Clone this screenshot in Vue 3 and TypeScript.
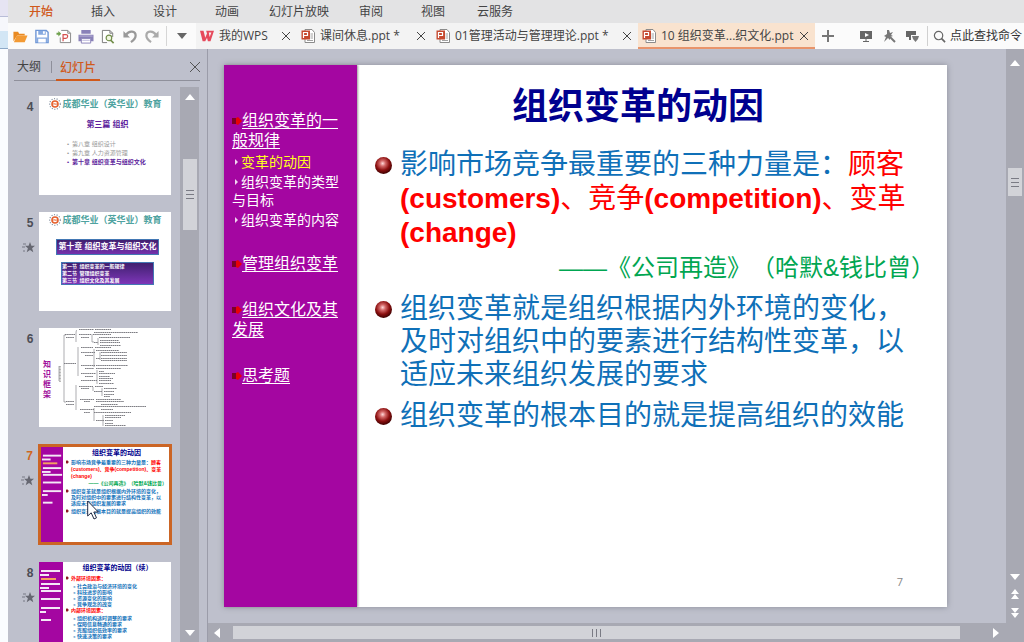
<script setup lang="ts">
interface Tab { label: string; kind: 'wps' | 'ppt'; size: string; active?: boolean }
interface NavItem { text: string; level: 'main' | 'sub'; current?: boolean }

const menus: string[] = ['开始', '插入', '设计', '动画', '幻灯片放映', '审阅', '视图', '云服务']

const tabs: Tab[] = [
  { label: '我的WPS', kind: 'wps', size: 't1' },
  { label: '课间休息.ppt *', kind: 'ppt', size: 't2' },
  { label: '01管理活动与管理理论.ppt *', kind: 'ppt', size: 't3' },
  { label: '10 组织变革...织文化.ppt', kind: 'ppt', size: 't4', active: true },
]

const nav: NavItem[] = [
  { text: '组织变革的一般规律', level: 'main' },
  { text: '变革的动因', level: 'sub', current: true },
  { text: '组织变革的类型与目标', level: 'sub' },
  { text: '组织变革的内容', level: 'sub' },
  { text: '管理组织变革', level: 'main' },
  { text: '组织文化及其发展', level: 'main' },
  { text: '思考题', level: 'main' },
]

const slides: number[] = [4, 5, 6, 7, 8]
const selected = 7

const navBars: number[][] = [
  [2, 8, 19], [1, 12, 9], [2, 16, 15], [2, 21, 19], [1, 25, 9],
  [2, 28, 20], [2, 36, 19], [2, 45, 19], [1, 49, 6], [2, 57, 10],
]

const outer: string[] = ['社会政治与经济环境的变化', '科技进步的影响', '资源变化的影响', '竞争观念的改变']
const inner: string[] = ['组织机构适时调整的要求', '保障信息畅通的要求', '克服组织低效率的要求', '快速决策的要求']

/* x, y, width of each leaf label in the outline of slide 6 */
const leaves: number[][] = [
  [40, 1, 15], [56, 1, 16], [55, 4, 44], [26, 6, 10], [27, 9, 8], [40, 6, 12], [42, 9, 8], [54, 6, 18],
  [60, 9, 31], [55, 14, 4], [61, 12, 19], [61, 14, 20], [61, 17, 21], [42, 19, 12], [56, 19, 16],
  [57, 22, 23], [42, 24, 14], [46, 27, 8], [62, 24, 26], [62, 27, 26], [57, 30, 4], [62, 30, 26],
  [62, 32, 26], [25, 35, 12], [42, 37, 14], [57, 37, 32], [46, 40, 9], [57, 40, 25], [60, 43, 5],
  [42, 45, 15], [60, 45, 16], [46, 48, 8], [60, 48, 11], [60, 50, 14], [42, 52, 16], [60, 52, 12],
  [60, 55, 15], [40, 58, 14], [56, 58, 8], [42, 60, 8], [65, 60, 13], [55, 63, 8], [65, 63, 10],
  [65, 66, 10], [65, 68, 6], [41, 71, 14], [57, 71, 25], [27, 73, 8], [45, 73, 6], [57, 73, 28],
  [27, 76, 8], [62, 76, 17], [41, 81, 14], [55, 78, 52], [45, 84, 6], [62, 81, 12], [55, 84, 37],
  [66, 87, 20], [66, 89, 16], [57, 92, 8], [66, 92, 8], [66, 95, 8], [66, 97, 21],
]
</script>

<template>
  <div class="screen">
    <div class="desktop-edge"><i class="e1" /><i class="e2" /><i class="e3" /><i class="e4" /></div>
    <div class="app">
      <nav class="menubar" aria-label="菜单">
        <button v-for="(m, i) in menus" :key="m" :class="{ on: i === 0, wide: m.length > 4 }">{{ m }}</button>
      </nav>

      <header class="bar">
        <div class="quick">
          <button aria-label="打开"><svg viewBox="0 0 16 16"><path d="M1 13V3h5l1 2h6v2H5z" fill="#e98a22" /><path d="M4.500 7H16l-3 7H1.500z" fill="#f39a34" /></svg></button>
          <button aria-label="保存"><svg viewBox="0 0 16 16"><path d="M1.500 1.500h11l2 2v11h-13z" fill="#fff" stroke="#6f97d6" stroke-width="1.500" /><path d="M4 2h8v4H4zM2 9h12v5H2z" fill="#86a9e0" /><path d="M9 2.500h2v2.500H9zM4 10.500h8v4H4z" fill="#fff" /></svg></button>
          <button aria-label="输出PDF"><svg viewBox="0 0 16 16"><path d="M5 1.500h7l3 3v10H4V9" fill="#fff" stroke="#858585" /><path d="M12 1.500v3h3" fill="none" stroke="#858585" /><path d="M7 13V6h3c3 0 2 4 0 4H7" fill="none" stroke="#d4514f" stroke-width="1.300" /><path d="M0 4h2V2l3 3-3 3V6H0z" fill="#6ea04c" /></svg></button>
          <button aria-label="打印"><svg viewBox="0 0 16 16"><path d="M3 1h10v4H3zM0 6h16v7H0z" fill="#8981b8" /><path d="M3 10h10v5H3z" fill="#fff" stroke="#8981b8" /><path d="M4 12h8M1 7.500h14" stroke="#b9b3d9" /></svg></button>
          <button aria-label="打印预览"><svg viewBox="0 0 16 16"><path d="M7 14.500H2v-13h8l3 3v4" fill="#fff" stroke="#777" /><path d="M10 1.500v3h3" fill="none" stroke="#777" /><circle cx="9" cy="9.500" r="3" fill="#eff5df" stroke="#718d49" stroke-width="1.200" /><path d="m11 12 3 3" stroke="#718d49" stroke-width="1.800" /></svg></button>
          <button aria-label="撤销"><svg viewBox="0 0 16 16"><path d="M4 6c3-5 10-4 10 1 0 3-2 5-5 7" fill="none" stroke="#999" stroke-width="2.400" /><path d="M1 2v7h7z" fill="#999" /></svg></button>
          <button aria-label="恢复"><svg viewBox="0 0 16 16"><path d="M12 6C9 1 2 2 2 7c0 3 2 5 5 7" fill="none" stroke="#aaa" stroke-width="2.400" /><path d="M15 2v7H8z" fill="#aaa" /></svg></button>
        </div>
        <button class="more" aria-label="更多"><svg viewBox="0 0 10 6"><path d="M0 0h10L5 6z" fill="#666" /></svg></button>

        <div v-for="t in tabs" :key="t.label" class="tab" :class="[t.size, { active: t.active }]">
          <svg v-if="t.kind === 'wps'" class="ti" viewBox="0 0 16 14"><path d="M0 1h4l2 8 2-5-1-3h9l-4 12H9L8 9l-2 4H3z" fill="#e64a5c" /><path d="m10 3 1 5 2-5z" fill="#f3f3f3" /></svg>
          <svg v-else class="ti" viewBox="0 0 14 14"><path d="M4 .5h7l2.500 3v10H4z" fill="#fff" stroke="#8b8b8b" /><path d="M9.500 5H12M9.500 7H12M9.500 9H12M6 11.500h6" stroke="#8a8a8a" stroke-width=".8" /><path d="M.5 1.500h8.500v9H.5z" fill="#c6492f" /><path d="M2.500 9V3.500h4v3h-4" fill="none" stroke="#fff" stroke-width="1.200" /></svg>
          <a href="#">{{ t.label }}</a>
          <button class="close" aria-label="关闭标签"><svg viewBox="0 0 8 8"><path d="m0 0 8 8M8 0 0 8" stroke="#444" /></svg></button>
        </div>

        <div class="tools">
          <button class="plus" aria-label="新建"><svg viewBox="0 0 12 12"><path d="M6 0v12M0 6h12" stroke="#777" stroke-width="2" /></svg></button>
          <button aria-label="播放"><svg viewBox="0 0 14 14"><path d="M1 2h12v8H1z" fill="#666" /><path d="M7 10v3M4 12.500h6" stroke="#666" /><path d="m6 4 4 2-4 2z" fill="#fff" /></svg></button>
          <button aria-label="动画效果"><svg viewBox="0 0 14 14"><path d="M5 1h2l1 3 3-1-2 3 2 1-3 1v3L6 9l-4 4 2-5-2-1 3-2z" fill="#777" /><path d="m8 8 5 5" stroke="#777" stroke-width="2" /></svg></button>
          <button aria-label="界面选项"><svg viewBox="0 0 14 14"><path d="M1 2h10v4H6v5H4V8H1z" fill="#666" /><path d="M7 7h7l-1 3-2.500 3L8 10z" fill="#777" /></svg></button>
        </div>
        <label class="search">
          <svg viewBox="0 0 14 14"><circle cx="6" cy="6" r="4.500" fill="none" stroke="#666" stroke-width="1.300" /><path d="m9 9 4 4" stroke="#666" stroke-width="1.800" /></svg>
          <input type="text" placeholder="点此查找命令" aria-label="点此查找命令">
        </label>
      </header>

      <div class="work">
        <aside class="panel">
          <div class="panel-head">
            <button>大纲</button><span class="sep" /><button class="on">幻灯片</button>
            <button class="x" aria-label="关闭窗格"><svg viewBox="0 0 10 10"><path d="m0 0 10 10M10 0 0 10" stroke="#555" /></svg></button>
          </div>
          <div class="panel-body">
            <ol class="thumbs">
              <li v-for="n in slides" :key="n" :class="{ sel: n === selected }">
                <div class="mark">
                  <b>{{ n }}</b>
                  <svg v-if="n !== 4 && n !== 6" viewBox="0 0 13 11"><path d="m8 0 1.400 3.700H13L10.100 6.200l1.200 4L8 8l-3.300 2.200 1.200-4L3 3.700h3.600z" fill="#666771" /><path d="M1 2h3M0 5h3M1 9h2" stroke="#777884" /></svg>
                </div>
                <div class="thumb" :class="'s' + n">
                  <div v-if="n < 6" class="brand">
                    <svg viewBox="0 0 14 12"><circle cx="7" cy="6" r="5.300" fill="none" stroke="#7c8a9c" stroke-width="1.200" stroke-dasharray="1 1.600" /><circle cx="7" cy="6" r="3" fill="#fff" stroke="#e6602d" stroke-width="1.600" /><path d="M4.500 6.500c2-2 3 1 5-1" fill="none" stroke="#e6602d" /></svg>
                    <span>成都华业（英华业）教育</span>
                  </div>
                  <template v-if="n === 4">
                    <h3>第三篇 组织</h3>
                    <ul><li>第八章 组织设计</li><li>第九章 人力资源管理</li><li class="cur">第十章 组织变革与组织文化</li></ul>
                  </template>
                  <template v-else-if="n === 5">
                    <h3>第十章 组织变革与组织文化</h3>
                    <div class="box"><p>第一节&ensp;组织变革的一般规律</p><p>第二节&ensp;管理组织变革</p><p>第三节&ensp;组织文化及其发展</p></div>
                  </template>
                  <template v-else-if="n === 6">
                    <strong><span v-for="c in '知识框架'" :key="c">{{ c }}</span></strong>
                    <svg class="map" viewBox="0 0 132 99">
                      <path d="M27 7h-2v67h2M20 38v15M38 2q-1 0-1 3v9M53 6v8h2M59 10v7M39 19v29M55 21v18M61 24v8M58 42v14M37 57v25M54 59v4M63 60v8M55 80v13M64 87v11" fill="none" stroke="#77777c" stroke-width=".6" />
                      <path d="M21 38v16" stroke="#777" stroke-dasharray="1 .5" />
                      <path v-for="(l, i) in leaves" :key="i" :d="`M${l[0]} ${l[1]}.5h${l[2]}`" stroke="#7c7c82" stroke-width="1.200" stroke-dasharray="1.600 .5" />
                    </svg>
                  </template>
                  <template v-else>
                    <svg class="bars" viewBox="0 0 24 99" preserveAspectRatio="xMinYMin slice"><rect v-for="(b, i) in navBars" :key="i" :x="b[0]" :y="b[1]" :width="b[2]" height="2" :fill="i === 2 ? '#f5a060' : '#f4e8f6'" /></svg>
                    <div v-if="n === 7" class="mini">
                      <h3>组织变革的动因</h3>
                      <p class="dot first">影响市场竞争最重要的三种力量是：<em>顾客(customers)、竞争(competition)、变革(change)</em></p>
                      <p class="cite">——《公司再造》（哈默&amp;钱比曾）</p>
                      <p class="dot">组织变革就是组织根据内外环境的变化，及时对组织中的要素进行结构性变革，以适应未来组织发展的要求</p>
                      <p class="dot last">组织变革的根本目的就是提高组织的效能</p>
                    </div>
                    <div v-else class="mini two">
                      <h3>组织变革的动因（续）</h3>
                      <p class="dot"><em>外部环境因素：</em></p>
                      <p v-for="o in outer" :key="o" class="sub">﹥{{ o }}</p>
                      <p class="dot"><em>内部环境因素：</em></p>
                      <p v-for="o in inner" :key="o" class="sub">﹥{{ o }}</p>
                    </div>
                  </template>
                  <svg v-if="n === selected" class="cursor" viewBox="0 0 12 20"><path d="M.7 1v15l3.500-3.200L7 19l2.500-1.200L6.800 12H11.300z" fill="#fff" stroke="#222b44" /></svg>
                </div>
              </li>
            </ol>
            <div class="vscroll left">
              <svg class="arrow" viewBox="0 0 10 6"><path d="M0 6h10L5 0z" fill="#fff" /></svg>
              <div class="track"><div class="grip"><i /><i /><i /></div></div>
              <svg class="arrow" viewBox="0 0 10 6"><path d="M0 0h10L5 6z" fill="#fff" /></svg>
            </div>
          </div>
        </aside>

        <main class="stage">
          <div class="canvas">
            <article class="slide">
              <nav class="side" aria-label="章节">
                <a v-for="i in nav" :key="i.text" href="#" :class="[i.level, { current: i.current }]">
                  <svg v-if="i.level === 'main'" viewBox="0 0 10 10"><path d="M0 2h4l2-1 4 4-4 4-2-1H0z" fill="#e80008" /><path d="M0 2h4v6H0z" fill="#7a0028" /></svg>
                  <svg v-else viewBox="0 0 9 10"><path d="m3 2 3 3-3 3z" fill="#f0d5f0" /></svg><span>{{ i.text }}</span>
                </a>
              </nav>
              <section class="content">
                <h1>组织变革的动因</h1>
                <ul>
                  <li>影响市场竞争最重要的三种力量是：<em>顾客<b>(customers)</b>、竞争<b>(competition)</b>、变革<b>(change)</b></em></li>
                </ul>
                <p class="quote">——《公司再造》（哈默&amp;钱比曾）</p>
                <ul class="second">
                  <li>组织变革就是组织根据内外环境的变化，及时对组织中的要素进行结构性变革，以适应未来组织发展的要求</li>
                  <li>组织变革的根本目的就是提高组织的效能</li>
                </ul>
                <footer>7</footer>
              </section>
            </article>
          </div>
          <div class="hscroll">
            <svg viewBox="0 0 6 10"><path d="M6 0v10L0 5z" fill="#fff" /></svg>
            <div class="hthumb"><i /><i /><i /></div>
            <svg viewBox="0 0 6 10"><path d="M0 0v10l6-5z" fill="#fff" /></svg>
          </div>
        </main>

        <div class="vscroll right">
          <svg class="arrow" viewBox="0 0 10 6"><path d="M0 6h10L5 0z" fill="#fff" /></svg>
          <div class="track"><div class="grip"><i /><i /><i /></div></div>
          <svg class="arrow" viewBox="0 0 10 6"><path d="M0 0h10L5 6z" fill="#fff" /></svg>
          <svg class="dbl" viewBox="0 0 10 10"><path d="M1 5h8L5 0zM1 10h8L5 5z" fill="#fff" /></svg>
          <svg class="dbl" viewBox="0 0 10 10"><path d="M1 0h8L5 5zM1 5h8l-4 5z" fill="#fff" /></svg>
        </div>
      </div>
    </div>
  </div>
</template>

<style>
body { margin: 0; overflow: hidden; }
</style>

<style scoped>
* { box-sizing: border-box; }
.screen { display: flex; height: 100vh; overflow: hidden; background: #bec0cc; font: 12px/18px "Open Sans", "Noto Sans CJK SC", sans-serif; color: #444; text-spacing-trim: space-all; }
button { border: 0; padding: 0; margin: 0; background: none; font: inherit; color: inherit; display: flex; align-items: center; justify-content: center; white-space: nowrap; }
a { color: inherit; text-decoration: none; }
svg { display: block; flex: none; }
ul, ol, p, h1, h3 { margin: 0; padding: 0; list-style: none; }
em { font-style: normal; }
.desktop-edge { width: 8px; flex: none; display: flex; flex-direction: column; }
.desktop-edge i { display: block; }
.e1 { height: 17px; background: #e6e4f3; border-bottom: 1px solid #b9bdd8; }
.e2 { height: 14px; background: #f6f7fc; }
.e3 { height: 18px; background: #d3e6f5; border-bottom: 1px solid #8ea9c8; }
.e4 { flex: 1; background: #fafcff; }
.app { flex: 1; min-width: 0; display: flex; flex-direction: column; }

.menubar { height: 23px; flex: none; display: flex; padding-left: 2px; background: #e3e3e4; }
.menubar button { width: 62px; }
.menubar .wide { width: 82px; }
.menubar .on { color: #d0591b; font-weight: 500; }

.bar { height: 26px; flex: none; display: flex; background: #fbfbfb; }
.quick { display: flex; align-items: center; gap: 6px; padding: 0 6px 0 4px; border-right: 1px solid #d6d6d6; margin: 3px 0; }
.quick svg { width: 16px; height: 15px; }
.more { width: 29px; }
.more svg { width: 10px; height: 6px; }
.tab { flex: none; display: flex; align-items: center; gap: 5px; padding-left: 4px; background: #f3f3f3; white-space: nowrap; }
.tab a { flex: 1; min-width: 0; }
.ti { width: 14px; height: 14px; }
.close { width: 22px; height: 24px; margin-left: -5px; }
.close svg { width: 8px; height: 8px; }
.t1 { width: 101px; }
.t2 { width: 135px; }
.t3 { width: 206px; }
.t4 { width: 177px; }
.tab.active { background: #f9e3cf; box-shadow: inset 0 -2px #e8946b; }
.tools { display: flex; align-items: center; gap: 9px; margin: 3px 0; padding: 0 8px 0 7px; border-right: 1px solid #d0d0d0; }
.tools svg { width: 14px; height: 14px; }
.tools .plus { margin-right: 16px; }
.tools .plus svg { width: 12px; height: 12px; }
.search { flex: 1; min-width: 0; display: flex; align-items: center; gap: 4px; padding-left: 5px; }
.search svg { width: 13px; height: 13px; }
.search input { flex: 1; min-width: 0; border: 0; padding: 0; background: none; font: inherit; outline: 0; }
.search input::placeholder { color: #333; opacity: 1; }

.work { flex: 1; min-height: 0; display: flex; }
.panel { width: 200px; flex: none; display: flex; flex-direction: column; border-right: 1px solid #9b9ca9; }
.panel-head { height: 32px; flex: none; display: flex; align-items: stretch; margin: 0 7px 0 6px; padding: 5px 0 0 3px; border-bottom: 1px solid #8f909b; }
.panel-head .sep { width: 1px; margin: 7px 4px 7px 10px; background: #8e8f9a; }
.panel-head .on { color: #d0591b; font-weight: 500; border-bottom: 2px solid #d0591b; padding: 2px 4px 0; margin-bottom: -1px; }
.panel-head .x { margin-left: auto; }
.panel-head .x svg { width: 10px; height: 10px; }
.panel-body { flex: 1; min-height: 0; display: flex; }
.thumbs { flex: 1; min-width: 0; padding-top: 15px; overflow: hidden; display: flex; flex-direction: column; gap: 17px; }
.thumbs > li { display: flex; flex: none; }
.mark { width: 31px; flex: none; padding: 2px 0 0 13px; display: flex; flex-direction: column; align-items: center; gap: 10px; }
.mark b { font: bold 12px/18px "Liberation Sans", sans-serif; color: #4c4d55; }
.mark svg { width: 13px; height: 11px; margin-left: -4px; }
.sel .mark b { color: #d0661c; }
.thumb { position: relative; width: 132px; height: 99px; flex: none; background: #fff; overflow: hidden; font-family: "Liberation Sans", "Noto Sans CJK SC", sans-serif; }
.sel .mark { width: 30px; padding-top: 3px; }
.sel .thumb { width: 134px; height: 101px; border: 3px solid #cb6525; overflow: visible; }
.brand { display: flex; align-items: center; justify-content: center; height: 15px; font: bold 9px/12px "Liberation Serif", "Noto Sans CJK SC", serif; color: #4fa3a0; white-space: nowrap; }
.brand svg { width: 14px; height: 12px; }
.s4 h3 { font-size: 8px; line-height: 12px; margin: 8px 0 9px 5px; text-align: center; color: #5c1d9c; }
.s4 ul { padding-left: 28px; }
.s4 ul li { font-size: 6px; line-height: 9px; color: #999; white-space: nowrap; }
.s4 ul li::before { content: "•"; margin-right: 3px; }
.s4 .cur { color: #5c1d9c; font-weight: bold; }
.s5 h3 { margin: 12px 12px 7px 17px; border: 1px solid #4378b4; background: linear-gradient(#40206f, #7531ac); color: #fff; font-size: 8px; line-height: 14px; text-align: center; white-space: nowrap; font-weight: 700; }
.s5 .box { margin: 0 17px 0 22px; height: 23px; border: 1px solid #4378b4; background: linear-gradient(#40206f, #7d36b8); color: #fff; font-size: 5px; font-weight: bold; white-space: nowrap; }
.s5 .box p { line-height: 7px; }
.s6 { display: flex; align-items: center; }
.s6 strong { margin: 3px 0 0 4px; width: 9px; display: flex; flex-direction: column; gap: 1px; font-size: 8px; line-height: 9px; color: #a0109c; }
.s6 .map { width: 132px; height: 99px; margin-left: -13px; }
.s7, .s8 { display: flex; align-items: stretch; }
.bars { width: 24px; height: 99px; background: #a406a1; }
.s7 .bars { width: 22px; height: 95px; }
.mini { flex: 1; min-width: 0; padding: 0 2px 0 3px; font-size: 5px; line-height: 6px; font-weight: bold; color: #1272ba; }
.mini h3 { font-size: 7px; line-height: 11px; margin-bottom: 2px; text-align: center; color: #00008c; }
.mini em { color: #f00; }
.mini p { white-space: nowrap; }
.mini .dot { white-space: normal; padding-left: 5px; margin-bottom: 1px; background: radial-gradient(circle at 1px 3px, #8d1a20 1px, transparent 2px) no-repeat; }
.s7 .dot { padding-right: 2px; }
.mini .first, .two .dot { line-height: 7px; }
.s7 h3 { margin-bottom: 1px; }
.s7 .first { margin-bottom: 0; }
.mini .cite { color: #00a651; text-align: right; margin-bottom: 2px; }
.mini .last { margin-top: 2px; }
.mini .sub { padding-left: 6px; }
.cursor { position: absolute; left: 46px; top: 53px; width: 12px; height: 20px; }

.vscroll { display: flex; flex-direction: column; align-items: center; background: #a8a9b3; flex: none; }
.vscroll .arrow { width: 10px; height: 6px; }
.vscroll .track { flex: 1; width: 14px; }
.grip { background: #d2d3d8; display: flex; flex-direction: column; align-items: center; justify-content: center; gap: 3px; }
.grip i { width: 8px; height: 1px; background: #7a7b84; }
.left { width: 19px; margin: 6px 8px 0 0; padding: 7px 0 6px; }
.left .track { padding-top: 59px; }
.left .grip { height: 71px; }
.right { width: 18px; padding: 11px 0 24px; }
.right .track { padding-top: 102px; }
.right .grip { height: 28px; }
.dbl { width: 10px; height: 10px; margin-top: 9px; }

.stage { flex: 1; min-width: 0; display: flex; flex-direction: column; }
.canvas { flex: 1; min-height: 0; padding: 16px 59px 0 16px; overflow: hidden; }
.slide { display: flex; aspect-ratio: 4 / 3; background: #fff; box-shadow: 0 0 6px #8b8c98; }
.side { width: 133px; flex: none; background: #a406a1; padding: 46px 14px 0 8px; color: #fff; box-shadow: 1px 0 2px #999; }
.side a { display: block; }
.side svg { display: inline-block; width: 10px; height: 10px; }
.side .main { font: 16px/20px "Liberation Sans", "Noto Sans CJK SC", sans-serif; margin-bottom: 26px; }
.side .main:first-child { margin-bottom: 2px; }
.side .main span { text-decoration: underline; text-underline-offset: 2px; text-decoration-thickness: 1px; }
.side .sub { font: 14px/18px "Liberation Sans", "Noto Sans CJK SC", sans-serif; margin-bottom: 2px; }
.side .sub svg { width: 9px; }
.side .sub + .main { margin-top: 25px; }
.side .current { color: #ffff20; }
.content { flex: 1; min-width: 0; display: flex; flex-direction: column; padding: 20px 18px 16px; font: 28px/34px "Liberation Sans", "Noto Sans CJK SC", sans-serif; color: #0f70b8; }
.content h1 { font-size: 36px; line-height: 44px; color: #00008f; text-align: center; margin: 0 28px 19px 0; }
.content li { position: relative; padding: 0 20px 0 25px; }
.content li::before { content: ""; position: absolute; left: 0; top: 9px; width: 17px; height: 17px; border-radius: 50%; background: radial-gradient(circle at 45% 38%, #ffdada 0, #d36868 20%, #8c1010 48%, #3c0000 75%, #766 100%); }
.content em { color: #f00; }
.quote { font-size: 24px; color: #00a651; text-align: right; margin: 1px -6px 7px 0; white-space: nowrap; }
.second li { line-height: 33px; margin-bottom: 8px; }
.content footer { margin-top: auto; padding-right: 26px; text-align: right; font: 11px/18px "Open Sans", sans-serif; color: #888; }

.hscroll { height: 19px; flex: none; display: flex; align-items: center; padding: 0 7px 0 6px; background: #a8a9b3; }
.hscroll svg { width: 6px; height: 10px; }
.hthumb { flex: 1; height: 13px; margin: 0 33px 0 13px; background: #d2d3d8; display: flex; align-items: center; justify-content: center; gap: 3px; }
.hthumb i { width: 1px; height: 8px; background: #7a7b84; }
</style>
